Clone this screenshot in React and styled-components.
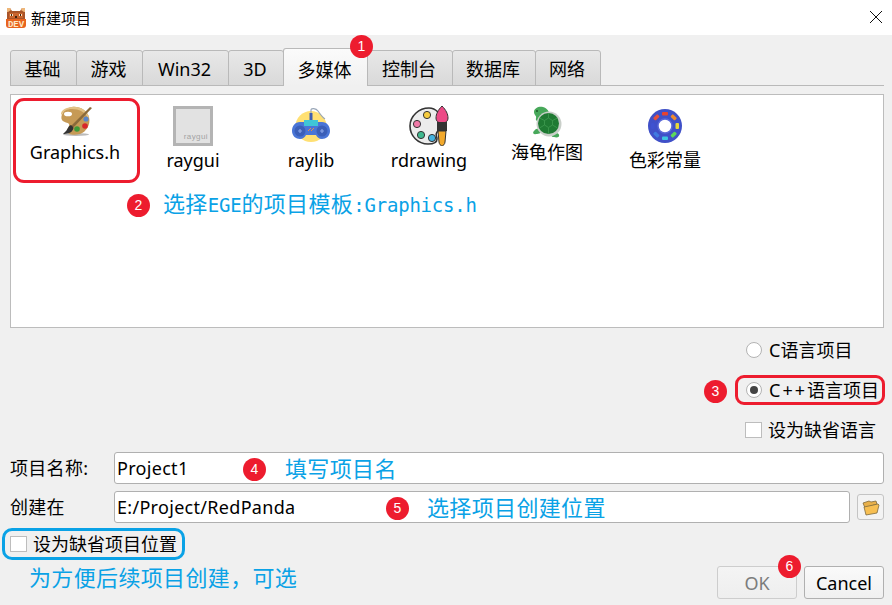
import React from "react"
import styled, { createGlobalStyle } from "styled-components"

const sans = `"Noto Sans", "Noto Sans CJK SC", sans-serif`

const GlobalStyle = createGlobalStyle`
  html, body {
    margin: 0;
    padding: 0;
    background: #f0f0f0;
  }
  * {
    box-sizing: border-box;
  }
`

const Dialog = styled.div`
  position: relative;
  width: 892px;
  height: 605px;
  overflow: hidden;
  display: flex;
  flex-direction: column;
  background: #f0f0f0;
  color: #000;
  font-family: ${sans};
  font-size: 18px;
`

const TitleBar = styled.div`
  height: 35px;
  flex: none;
  display: flex;
  align-items: center;
  padding: 0 10px 0 6px;
  background: #fff;
`

const Title = styled.div`
  margin-left: 5px;
  font-size: 15px;
  line-height: 20px;
  flex: 1;
`

const CloseIcon = styled.svg`
  width: 12px;
  height: 12px;
  margin-bottom: 1px;
`

const Body = styled.div`
  flex: 1;
  display: flex;
  flex-direction: column;
  padding: 13px 8px 0 10px;
`

const TabStrip = styled.div`
  height: 38px;
  flex: none;
  display: flex;
  align-items: flex-end;
  border-bottom: 1px solid #b9b9b9;
`

const Tab = styled.div`
  width: ${({ $w }) => $w}px;
  height: ${({ $active }) => ($active ? 38 : 36)}px;
  margin-bottom: -1px;
  margin-right: -1px;
  display: flex;
  align-items: center;
  justify-content: center;
  line-height: 24px;
  padding: ${({ $active }) => ($active ? 4 : 2)}px 2px 0 0;
  border: 1px solid #b9b9b9;
  border-bottom: ${({ $active }) => ($active ? "none" : "1px solid #b9b9b9")};
  border-radius: 3px 3px 0 0;
  background: ${({ $active }) =>
    $active ? "linear-gradient(#fbfbfb, #f0f0f0)" : "linear-gradient(#e8e8e8, #d9d9d9)"};
  position: relative;
  z-index: ${({ $active }) => ($active ? 1 : 0)};
`

const Panel = styled.div`
  position: relative;
  height: 234px;
  flex: none;
  margin-top: 8px;
  padding: 11px 0 0 5px;
  display: flex;
  align-items: flex-start;
  background: #fff;
  border: 1px solid #bcbcbc;
`

const Item = styled.div`
  width: 118px;
  display: flex;
  flex-direction: column;
  align-items: center;
`

const IconSvg = styled.svg`
  display: block;
  flex: none;
  width: 40px;
  height: ${({ $h }) => $h}px;
`

const ItemLabel = styled.div`
  margin-top: 2px;
  line-height: 24px;
  white-space: nowrap;
`

const RayguiIcon = styled.div`
  width: 40px;
  height: 40px;
  display: flex;
  align-items: flex-end;
  justify-content: flex-end;
  padding: 0 2px 1px 0;
  border: 3px solid #b4b4b4;
  background: #e2e2e2;
  color: #a2a2a2;
  font-family: "Liberation Sans", sans-serif;
  font-size: 8px;
  letter-spacing: 0.4px;
  line-height: 10px;
`

const SelectedRing = styled.div`
  position: absolute;
  left: 2px;
  top: 3px;
  width: 127px;
  height: 85px;
  border: 3px solid #ed1c2e;
  border-radius: 11px;
`

const Options = styled.div`
  flex: none;
  align-self: flex-end;
  width: 150px;
  margin: 7px -1px 0 0;
  display: flex;
  flex-direction: column;
`

const OptionRow = styled.div`
  height: 30px;
  display: flex;
  align-items: center;
  padding-left: ${({ $ring }) => ($ring ? 8 : 11)}px;
  gap: 7px;
  margin-bottom: 10px;
  white-space: nowrap;
  line-height: 24px;
  border: ${({ $ring }) => ($ring ? "3px solid #ed1c2e" : "none")};
  border-radius: ${({ $ring }) => ($ring ? "9px" : "0")};

  &:last-child {
    margin-bottom: 0;
    padding-left: 10px;
    gap: 6px;
  }
`

const Plus = styled.span`
  letter-spacing: 2px;
`

const Radio = styled.span`
  width: 16px;
  height: 16px;
  flex: none;
  display: flex;
  align-items: center;
  justify-content: center;
  border: 1px solid #b3b3b3;
  border-radius: 50%;
  background: #fff;

  &::after {
    content: "";
    display: ${({ $on }) => ($on ? "block" : "none")};
    width: 8px;
    height: 8px;
    border-radius: 50%;
    background: #444;
  }
`

const Checkbox = styled.span`
  width: 17px;
  height: 16px;
  flex: none;
  border: 1px solid #bdbdbd;
  background: #fff;
`

const Form = styled.div`
  margin-top: 7px;
  display: flex;
  flex-direction: column;
  gap: 7px;
`

const FormRow = styled.div`
  display: flex;
  align-items: center;
`

const FormLabel = styled.div`
  width: 104px;
  flex: none;
  line-height: 24px;
  letter-spacing: 0.3px;
`

const TextBox = styled.div`
  flex: 1;
  height: 32px;
  padding-left: 2px;
  display: flex;
  align-items: center;
  line-height: 24px;
  letter-spacing: 0.3px;
  background: #fff;
  border: 1px solid #b0b0b0;
  border-radius: 3px;
`

const FolderButton = styled.div`
  width: 27px;
  height: 26px;
  flex: none;
  margin-left: 7px;
  display: flex;
  align-items: center;
  justify-content: center;
  background: #f3f3f3;
  border: 1px solid #c4c4c4;
  border-radius: 3px;
`

const DefaultLocation = styled.div`
  align-self: flex-start;
  height: 32px;
  margin: 5px 0 0 -8px;
  padding: 0 5px;
  display: flex;
  align-items: center;
  gap: 6px;
  line-height: 24px;
  white-space: nowrap;
  border: 3px solid #0aa2e6;
  border-radius: 10px;
`

const Footer = styled.div`
  margin-top: 6px;
  display: flex;
  align-items: flex-start;
`

const Hint = styled.div`
  flex: 1;
  margin: 0 0 0 19px;
  color: #0aa2e6;
  font-size: 22px;
  letter-spacing: 0.35px;
  line-height: 22px;
  white-space: nowrap;
`

const Button = styled.div`
  width: 80px;
  height: 33px;
  margin-left: 7px;
  display: flex;
  align-items: center;
  justify-content: center;
  line-height: 24px;
  color: ${({ $disabled }) => ($disabled ? "#7c7c7c" : "#000")};
  border: 1px solid ${({ $disabled }) => ($disabled ? "#cdcdcd" : "#b0b0b0")};
  border-radius: 3px;
  background: ${({ $disabled }) =>
    $disabled ? "linear-gradient(#f4f4f4, #eeeeee)" : "linear-gradient(#fafafa, #f0f0f0)"};
`

const Badge = styled.span`
  width: 23px;
  height: 23px;
  flex: none;
  display: flex;
  align-items: center;
  justify-content: center;
  border-radius: 50%;
  background: #ed1c2e;
  color: #fff;
  font-family: "Liberation Sans", sans-serif;
  font-size: 14px;
  line-height: 23px;
`

const Note = styled.div`
  position: absolute;
  z-index: 2;
  left: ${({ $x }) => $x}px;
  top: ${({ $y }) => $y}px;
  height: 23px;
  display: flex;
  align-items: center;
  gap: ${({ $gap }) => $gap || 0}px;
  color: #0aa2e6;
  font-size: 22px;
  line-height: 22px;
  white-space: nowrap;
`

const NoteText = styled.span`
  padding-bottom: 3px;
  letter-spacing: 0.35px;
`

const Mono = styled.span`
  font-family: "DejaVu Sans Mono", monospace;
  font-size: 19px;
  letter-spacing: -0.2px;
`

const Logo = () => (
  <svg width="20" height="20" viewBox="0 0 20 20">
    <path d="M1 0h3l2 3h8l2-3h3v11H1z" fill="#a8552a" />
    <path d="M1 0h3l1 2-3 2H1zM19 0h-3l-1 2 3 2h1z" fill="#eeb678" />
    <path d="M3 5h14v5H3z" fill="#c9652e" />
    <path d="M4 6h3v2H4zM13 6h3v2h-3z" fill="#f6e3c5" />
    <path d="M5 6h1v2H5zM14 6h1v2h-1zM9 8h2v2H9z" fill="#40220f" />
    <path d="M0 11h20v6q0 3-3 3H3q-3 0-3-3z" fill="#e8641e" />
    <text x="10" y="18.5" textAnchor="middle" fontFamily="Liberation Mono, monospace" fontSize="9" fontWeight="700" fill="#fde9c9">DEV</text>
  </svg>
)

const PaletteIcon = () => (
  <IconSvg $h={32} viewBox="0 0 40 32">
    <ellipse cx="21" cy="28.5" rx="13" ry="1.5" fill="#bbb" />
    <path d="M17 1c7-1 15 3 17 10 2 8-3 15-9 17-7 2-13 0-13-3 0-3 3-4 2-7-1-2-5-1-7-4S8 2 17 1z" fill="#c69a56" />
    <path d="M17 1c7-1 15 3 17 10l-1 1C30 6 24 3 17 3 12 3 8 5 7 9l-1-1c0-3 3-6 11-7z" fill="#e2c184" />
    <ellipse cx="13" cy="8" rx="4" ry="2.3" fill="#fff" />
    <circle cx="31" cy="13" r="2.6" fill="#5a86c8" />
    <circle cx="30" cy="20" r="2.8" fill="#d8262a" />
    <circle cx="22" cy="23" r="2.8" fill="#3e9a38" />
    <path d="M35 1 16 20l2 2L37 2z" fill="#8a6a3a" />
    <path d="M16 19c-3 1-3 4-5 6l-3 3c4 0 8-1 9-3 1-1 2-3 1-4z" fill="#333" />
  </IconSvg>
)

const RaylibIcon = () => (
  <IconSvg $h={40} viewBox="0 0 40 40">
    <circle cx="20" cy="20.5" r="15.5" fill="#ffe073" />
    <path d="M20 8V4c0-2 5-2 7 1 2 3 4 6 7 8" fill="none" stroke="#9aa7b8" strokeWidth="1.2" />
    <path d="M18.500 7h3v7h-3z" fill="#3d5fb4" />
    <path d="M9 16h22c5 0 8 4 8 9 0 5-4 8-8 8-3 0-5-2-6-4H15c-1 2-3 4-6 4-4 0-8-3-8-8 0-5 3-9 8-9z" fill="#4a75d6" />
    <path d="M13 14h14v6H13z" fill="#3fc6d6" />
    <circle cx="9" cy="25" r="5.5" fill="#3b5fb8" />
    <circle cx="31" cy="25" r="5.5" fill="#3b5fb8" />
    <path d="M7 25h4M9 23v4M29 25h4M31 23v4" stroke="#8aa6ea" strokeWidth="1.2" />
    <path d="M17 25l3-3M20 25l3-3" stroke="#e88a4a" strokeWidth="1" />
  </IconSvg>
)

const DrawingIcon = () => (
  <IconSvg $h={40} viewBox="0 0 40 40">
    <path d="M20 2C10 2 1 10 1 20s8 18 18 18c6 0 9-2 9-5s-2-4 0-7c1-1 3-1 5-2 3-1 2-5 1-8C32 8 27 2 20 2z" fill="#ececec" stroke="#333" strokeWidth="1.6" />
    <circle cx="18" cy="9" r="3.6" fill="#f6cc3f" stroke="#333" strokeWidth="1" />
    <circle cx="8" cy="18" r="3.6" fill="#f07aa8" stroke="#333" strokeWidth="1" />
    <circle cx="12" cy="29" r="3.6" fill="#3fb88f" stroke="#333" strokeWidth="1" />
    <circle cx="23" cy="32" r="3.6" fill="#44b3e0" stroke="#333" strokeWidth="1" />
    <path d="M33 0c4 4 6 8 6 12 0 3-2 5-6 5s-6-2-6-5c0-4 2-8 6-12z" fill="#ec4a86" stroke="#333" strokeWidth="1" />
    <path d="M28 16h10v9H28z" fill="#333" />
    <path d="M29 25h8l-1 11c0 2-2 4-3 4s-3-2-3-4z" fill="#f2a92c" stroke="#333" strokeWidth="1" />
  </IconSvg>
)

const TurtleIcon = () => (
  <IconSvg $h={32} viewBox="0 0 40 32">
    <path d="M7 6c0-4 5-6 9-5 4 1 7 5 6 8-2 2-5 3-8 6-3 1-6 0-5-3 1-2-2-3-2-6z" fill="#47a85a" />
    <circle cx="10" cy="5" r="1" fill="#1c5a2a" />
    <path d="M8 24c2-2 5-1 7 0 0 3-3 4-6 4-3 1-4-2-1-4z" fill="#47a85a" />
    <path d="M26 28c3-1 6-1 6 1 1 2-2 3-5 2-3 0-3-2-1-3z" fill="#47a85a" />
    <circle cx="22" cy="18" r="12.5" fill="#c9cfc9" />
    <circle cx="21.5" cy="17.5" r="10.5" fill="#1f7a33" />
    <path d="M21.500 12l4 2.500v4.500l-4 2.500-4-2.500V14.500zM21.500 7v5M25.500 14.500l5-2.500M25.500 19l5 3M21.500 22v6M17.500 19l-5 3M17.500 14.500l-5-2.500" fill="none" stroke="#3f9a50" strokeWidth="0.8" />
  </IconSvg>
)

const segments = [
  ["#e8432e", 0],
  ["#ef8a2e", 45],
  ["#e8d83a", 90],
  ["#5cd85c", 135],
  ["#3fc6e0", 180],
  ["#3f7ae0", 225],
  ["#3f52d0", 270],
  ["#e8503a", 315],
]

const DonutIcon = () => (
  <IconSvg $h={40} viewBox="0 0 40 40">
    <circle cx="20" cy="20" r="17" fill="#3f50c8" />
    {segments.map(([color, angle]) => (
      <rect key={angle} x="17" y="6" width="6" height="3.500" rx="1" fill={color} transform={`rotate(${angle} 20 20)`} />
    ))}
    <circle cx="20" cy="20" r="7" fill="#fff" stroke="#5a68d8" strokeWidth="1.500" />
  </IconSvg>
)

const FolderIcon = () => (
  <svg width="18" height="17" viewBox="0 0 18 17">
    <path d="M1 4l6-2 2 1 5-1 1 3-12 4z" fill="#e8b04a" stroke="#7d6a3c" strokeWidth="0.8" />
    <path d="M2 8l14-3 1 1-2 8-11 2z" fill="#f7bf52" stroke="#7d6a3c" strokeWidth="0.8" />
  </svg>
)

const items = [
  { label: "Graphics.h", icon: <PaletteIcon /> },
  { label: "raygui", icon: <RayguiIcon>raygui</RayguiIcon> },
  { label: "raylib", icon: <RaylibIcon /> },
  { label: "rdrawing", icon: <DrawingIcon /> },
  { label: "海龟作图", icon: <TurtleIcon /> },
  { label: "色彩常量", icon: <DonutIcon /> },
]

const tabs = [
  { label: "基础", w: 67 },
  { label: "游戏", w: 67 },
  { label: "Win32", w: 87 },
  { label: "3D", w: 56 },
  { label: "多媒体", w: 85, active: true },
  { label: "控制台", w: 86 },
  { label: "数据库", w: 84 },
  { label: "网络", w: 66 },
]

const App = () => (
  <Dialog>
    <GlobalStyle />
    <TitleBar>
      <Logo />
      <Title>新建项目</Title>
      <CloseIcon viewBox="0 0 12 12">
        <path d="M0 0l12 12M12 0L0 12" stroke="#111" strokeWidth="1" />
      </CloseIcon>
    </TitleBar>
    <Body>
      <TabStrip>
        {tabs.map((tab) => (
          <Tab key={tab.label} $w={tab.w} $active={tab.active}>
            {tab.label}
          </Tab>
        ))}
      </TabStrip>
      <Panel>
        {items.map((item) => (
          <Item key={item.label}>
            {item.icon}
            <ItemLabel>{item.label}</ItemLabel>
          </Item>
        ))}
        <SelectedRing />
      </Panel>
      <Options>
        <OptionRow>
          <Radio />
          C语言项目
        </OptionRow>
        <OptionRow $ring>
          <Radio $on />
          <span>
            <Plus>C++</Plus>语言项目
          </span>
        </OptionRow>
        <OptionRow>
          <Checkbox />
          设为缺省语言
        </OptionRow>
      </Options>
      <Form>
        <FormRow>
          <FormLabel>项目名称:</FormLabel>
          <TextBox>Project1</TextBox>
        </FormRow>
        <FormRow>
          <FormLabel>创建在</FormLabel>
          <TextBox>E:/Project/RedPanda</TextBox>
          <FolderButton>
            <FolderIcon />
          </FolderButton>
        </FormRow>
      </Form>
      <DefaultLocation>
        <Checkbox />
        设为缺省项目位置
      </DefaultLocation>
      <Footer>
        <Hint>为方便后续项目创建，可选</Hint>
        <Button $disabled>OK</Button>
        <Button>Cancel</Button>
      </Footer>
    </Body>

    <Note $x={350} $y={35}>
      <Badge>1</Badge>
    </Note>
    <Note $x={127} $y={194} $gap={13}>
      <Badge>2</Badge>
      <NoteText>
        选择<Mono>EGE</Mono>的项目模板<Mono>:Graphics.h</Mono>
      </NoteText>
    </Note>
    <Note $x={704} $y={380}>
      <Badge>3</Badge>
    </Note>
    <Note $x={243} $y={458} $gap={19}>
      <Badge>4</Badge>
      <NoteText>填写项目名</NoteText>
    </Note>
    <Note $x={386} $y={497} $gap={18}>
      <Badge>5</Badge>
      <NoteText>选择项目创建位置</NoteText>
    </Note>
    <Note $x={778} $y={555}>
      <Badge>6</Badge>
    </Note>
  </Dialog>
)

export default App
